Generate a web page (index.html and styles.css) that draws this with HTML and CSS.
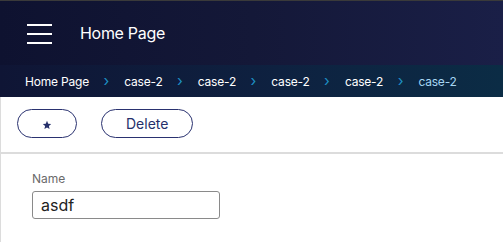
FILE: index.html
```html
<!DOCTYPE html>
<html lang="en">
<head>
  <meta charset="UTF-8" />
  <title>Home Page</title>
  <link rel="stylesheet" href="styles.css">
</head>
<body>
  <div class="wrapper">
    <header>
      <div class="title-bar">
        <button class="menu-btn" aria-label="Menu">
          <span></span><span></span><span></span>
        </button>
        <h1>Home Page</h1>
      </div>
      <nav class="crumbs">
        <a href="#">Home Page</a>
        <span class="sep">&#x203A;</span>
        <a href="#">case-2</a>
        <span class="sep">&#x203A;</span>
        <a href="#">case-2</a>
        <span class="sep">&#x203A;</span>
        <a href="#">case-2</a>
        <span class="sep">&#x203A;</span>
        <a href="#">case-2</a>
        <span class="sep">&#x203A;</span>
        <a class="current" href="#">case-2</a>
      </nav>
    </header>

    <main>
      <div class="toolbar">
        <button class="pill star-btn" aria-label="Favourite">
          <svg width="10" height="10" viewBox="0 0 24 24"><path d="M12 2l2.9 6.9 7.1.6-5.4 4.7 1.6 7.3L12 17.8 5.8 21.5l1.6-7.3L2 9.5l7.1-.6z" fill="#25306b"/></svg>
        </button>
        <button class="pill">Delete</button>
      </div>
      <form class="fields">
        <label for="name">Name</label>
        <input type="text" id="name" value="asdf" />
      </form>
    </main>
  </div>
</body>
</html>
```

FILE: styles.css
```css
* {
  box-sizing: border-box;
  margin: 0;
  padding: 0;
}

body {
  font-family: 'Inter', 'Liberation Sans', sans-serif;
  background-color: #ffffff;
  overflow: hidden;
}

.wrapper {
  min-height: 100vh;
  display: flex;
  flex-direction: column;
}

header {
  border-top: 1px solid #3a3a3a;
  color: white;
}

.title-bar {
  height: 64px;
  display: flex;
  align-items: center;
  padding-left: 27px;
  background: linear-gradient(90deg, #0e1230 0%, #141838 50%, #1a1f47 100%);
}

.menu-btn {
  width: 25px;
  height: 20px;
  background: none;
  border: none;
  display: flex;
  flex-direction: column;
  justify-content: space-between;
  margin-right: 28px;
  margin-top: 1px;
  cursor: pointer;
}

.menu-btn span {
  display: block;
  height: 2px;
  width: 25px;
  background: #ffffff;
}

.title-bar h1 {
  font-size: 16px;
  font-weight: 400;
  letter-spacing: -0.3px;
}

.crumbs {
  height: 32px;
  display: flex;
  align-items: center;
  padding-left: 25px;
  background: linear-gradient(90deg, #0f1535 0%, #0e2140 55%, #0b2c45 100%);
  font-size: 12px;
}

.crumbs a {
  color: #ffffff;
  text-decoration: none;
  letter-spacing: -0.2px;
}

.crumbs a.current {
  color: #a6d6f2;
}

.crumbs .sep {
  color: #1d8fc4;
  font-size: 15px;
  margin: -2px 15px 0 14.5px;
}

main {
  flex: 1;
  border-left: 1px solid #dcdcdc;
}

.toolbar {
  height: 57px;
  display: flex;
  align-items: center;
  gap: 24px;
  padding: 0 0 2px 16px;
  border-bottom: 2px solid #dcdcdc;
}

.pill {
  height: 29px;
  background: #ffffff;
  border: 1px solid #2a3270;
  border-radius: 15px;
  color: #25306b;
  font-family: inherit;
  font-size: 14px;
  padding: 0 24px;
  cursor: pointer;
}

.star-btn {
  width: 60px;
  padding: 0;
  display: flex;
  align-items: center;
  justify-content: center;
}

.star-btn svg {
  margin-top: 2px;
}

.fields {
  padding: 17px 0 0 31px;
}

.fields label {
  display: block;
  font-size: 12px;
  color: #6a6a6a;
  margin-bottom: 5px;
}

.fields input {
  width: 188px;
  height: 28px;
  border: 1px solid #8a8a8a;
  border-radius: 3px;
  padding: 0 8px;
  font-family: inherit;
  font-size: 16px;
  color: #222222;
}
```
